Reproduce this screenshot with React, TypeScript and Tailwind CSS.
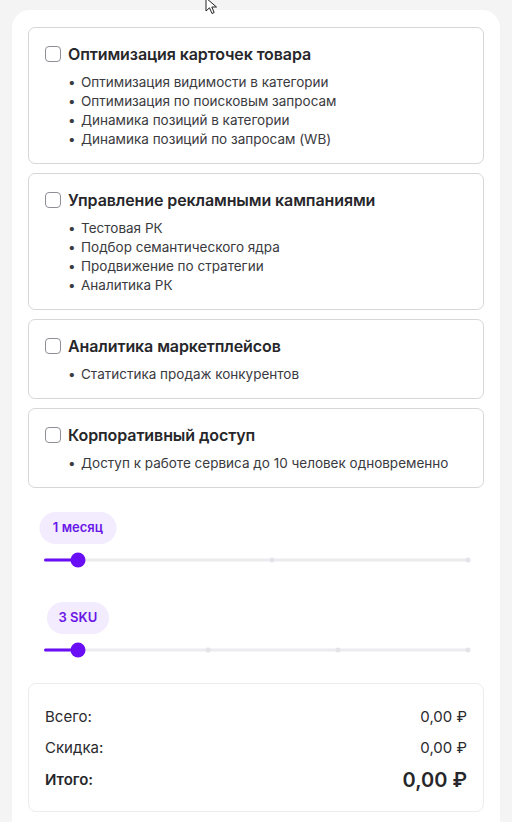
import React from "react";

const cards = [
  {
    title: "Оптимизация карточек товара",
    items: [
      "Оптимизация видимости в категории",
      "Оптимизация по поисковым запросам",
      "Динамика позиций в категории",
      "Динамика позиций по запросам (WB)",
    ],
  },
  {
    title: "Управление рекламными кампаниями",
    items: [
      "Тестовая РК",
      "Подбор семантического ядра",
      "Продвижение по стратегии",
      "Аналитика РК",
    ],
  },
  {
    title: "Аналитика маркетплейсов",
    items: ["Статистика продаж конкурентов"],
  },
  {
    title: "Корпоративный доступ",
    items: ["Доступ к работе сервиса до 10 человек одновременно"],
  },
];

function Slider({ label, dots, badgeW }: { label: string; dots: number[]; badgeW: string }) {
  const pct = 8;
  return (
    <div className="relative h-[49px] mx-4">
      <div className="absolute left-0 right-0 top-[48px] h-[3px] -translate-y-1/2 rounded bg-[#ececef]" />
      {dots.map((d) => (
        <div
          key={d}
          className="absolute top-[48px] h-[5px] w-[5px] -translate-x-1/2 -translate-y-1/2 rounded-full bg-[#e4e4e8]"
          style={{ left: `${d}%` }}
        />
      ))}
      <div
        className="absolute left-0 top-[48px] h-[3px] -translate-y-1/2 rounded bg-[#6a0ff5]"
        style={{ width: `${pct}%` }}
      />
      <div
        className="absolute top-[48px] h-[15px] w-[15px] -translate-x-1/2 -translate-y-1/2 rounded-full bg-[#6a0ff5]"
        style={{ left: `${pct}%` }}
      />
      <div
        className={`absolute top-[0px] flex h-[32px] -translate-x-1/2 items-center justify-center rounded-full bg-[#f2ecfe] text-[13px] font-semibold text-[#6a16e6] ${badgeW}`}
        style={{ left: `${pct}%` }}
      >
        {label}
      </div>
    </div>
  );
}

export default function App() {
  return (
    <div
      className="relative min-h-[822px] overflow-hidden bg-[#f4f4f4]"
      style={{ fontFamily: "Inter, 'Noto Sans', sans-serif" }}
    >
      <svg className="absolute left-[205px] top-[-3px] z-10" width="14" height="18" viewBox="0 0 14 18">
        <path d="M1 1 L1 14 L4.5 10.8 L7 16.5 L9.2 15.5 L6.8 10 L11.5 10 Z" fill="#fff" stroke="#222" strokeWidth="1" strokeLinejoin="round" />
      </svg>
      <div className="mx-3 mt-[10px] rounded-[18px] bg-white px-4 pt-[17px] pb-10">
        <div className="flex flex-col gap-[9px]">
          {cards.map((c) => (
            <div key={c.title} className="rounded-[7px] border border-[#d6d6db] px-4 pt-[16px] pb-[14px]">
              <div className="flex items-center gap-[7px]">
                <div className="h-[16px] w-[16px] shrink-0 rounded-[4px] border border-[#8e8e96] bg-white" />
                <div className="text-[16px] font-semibold leading-[20px] tracking-[-0.1px] text-[#27272b]">{c.title}</div>
              </div>
              <ul className="mt-[9px] pl-[23px]">
                {c.items.map((it) => (
                  <li key={it} className="flex text-[13.5px] leading-[19px] text-[#3a3a40]">
                    <span className="w-[13px] shrink-0">•</span>
                    <span>{it}</span>
                  </li>
                ))}
              </ul>
            </div>
          ))}
        </div>

        <div className="mt-[24px]">
          <Slider label="1 месяц" dots={[53.8, 100]} badgeW="w-[77px]" />
        </div>
        <div className="mt-[41px]">
          <Slider label="3 SKU" dots={[38.6, 69.4, 100]} badgeW="w-[62px]" />
        </div>

        <div className="mt-[32px] rounded-[8px] border border-[#ececee] px-4 pt-[22px] pb-[19px]">
          <div className="flex h-[22px] items-center justify-between text-[15px] text-[#2a2a2e]">
            <span>Всего:</span>
            <span>0,00 ₽</span>
          </div>
          <div className="mt-[9px] flex h-[22px] items-center justify-between text-[15px] text-[#2a2a2e]">
            <span>Скидка:</span>
            <span>0,00 ₽</span>
          </div>
          <div className="mt-[9px] flex h-[24px] items-center justify-between text-[#27272b]">
            <span className="text-[15px] font-semibold">Итого:</span>
            <span className="text-[20px] font-semibold">0,00 ₽</span>
          </div>
        </div>
      </div>
    </div>
  );
}
